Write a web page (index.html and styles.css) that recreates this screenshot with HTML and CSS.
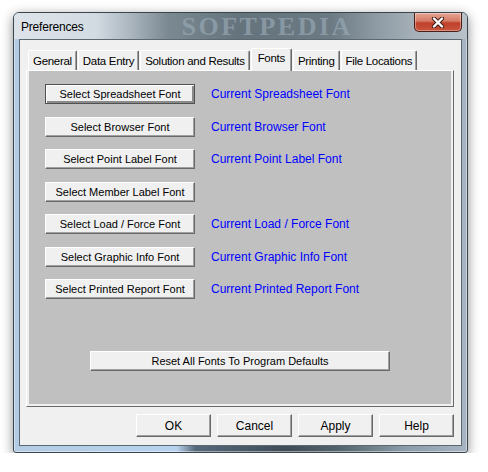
FILE: index.html
```html
<!DOCTYPE html>
<html lang="en">
<head>
    <meta charset="UTF-8">
    <meta name="viewport" content="width=device-width, initial-scale=1.0">
    <title>Preferences</title>
    <link rel="stylesheet" href="styles.css">
</head>
<body>
    <div class="window">
        <div class="titlebar">
            <span class="title">Preferences</span>
            <span class="watermark">SOFTPEDIA</span>
            <button class="close" aria-label="Close">
                <svg width="14" height="11" viewBox="0 0 14 11">
                    <path d="M3 1.5 L11 9.5 M11 1.5 L3 9.5" stroke="#3b1a14" stroke-width="4.2" stroke-linecap="round"/>
                    <path d="M3 1.5 L11 9.5 M11 1.5 L3 9.5" stroke="#fff" stroke-width="2.4" stroke-linecap="round"/>
                </svg>
            </button>
        </div>

        <div class="client">
            <div class="tabs">
                <div class="tab">General</div>
                <div class="tab">Data Entry</div>
                <div class="tab">Solution and Results</div>
                <div class="tab active">Fonts</div>
                <div class="tab">Printing</div>
                <div class="tab">File Locations</div>
            </div>

            <div class="panel">
                <div class="panel-inner">
                    <div class="font-rows">
                        <div class="font-row">
                            <button class="btn btn-default">Select Spreadsheet Font</button>
                            <span class="current">Current Spreadsheet Font</span>
                        </div>
                        <div class="font-row">
                            <button class="btn">Select Browser Font</button>
                            <span class="current">Current Browser Font</span>
                        </div>
                        <div class="font-row">
                            <button class="btn">Select Point Label Font</button>
                            <span class="current">Current Point Label Font</span>
                        </div>
                        <div class="font-row">
                            <button class="btn">Select Member Label Font</button>
                        </div>
                        <div class="font-row">
                            <button class="btn">Select Load / Force Font</button>
                            <span class="current">Current Load / Force Font</span>
                        </div>
                        <div class="font-row">
                            <button class="btn">Select Graphic Info Font</button>
                            <span class="current">Current Graphic Info Font</span>
                        </div>
                        <div class="font-row">
                            <button class="btn">Select Printed Report Font</button>
                            <span class="current">Current Printed Report Font</span>
                        </div>
                    </div>

                    <div class="reset-row">
                        <button class="btn btn-reset">Reset All Fonts To Program Defaults</button>
                    </div>
                </div>
            </div>

            <div class="actions">
                <button class="btn btn-action">OK</button>
                <button class="btn btn-action">Cancel</button>
                <button class="btn btn-action">Apply</button>
                <button class="btn btn-action">Help</button>
            </div>
        </div>
    </div>
</body>
</html>
```

FILE: styles.css
```css
body {
    margin: 0;
    background: #fff;
    font-family: 'Liberation Sans', Arial, sans-serif;
}

.window {
    width: 455px;
    height: 441px;
    margin: 12px 0 0 13px;
    box-sizing: border-box;
    border: 1px solid #3a454d;
    border-radius: 6px 6px 3px 3px;
    background: linear-gradient(90deg, #b3cce4 0%, #b7d2ee 36%, #56697a 40%, #3e4c57 60%, #55656f 72%, #8b9ba7 86%, #a6b5c1 100%);
    box-shadow: 0 3px 12px rgba(0, 0, 0, 0.45), inset 0 0 0 1px rgba(255, 255, 255, 0.45);
    padding: 0 5px 6px 5px;
    display: flex;
    flex-direction: column;
}

.titlebar {
    height: 26px;
    margin: 0 -5px;
    padding: 0 5px 0 7px;
    display: flex;
    align-items: flex-start;
    border-radius: 5px 5px 0 0;
    background: linear-gradient(90deg, #dde3e9 0%, #d3dbe2 18%, #a9b4bd 26%, #7b8993 34%, #65737d 50%, #6c7a84 70%, #8e9ba4 80%, #a4afb7 88%, #b9c2c9 100%);
}
.title {
    font-size: 12px;
    letter-spacing: -0.2px;
    color: #000;
    line-height: 28px;
}
.watermark {
    margin-left: 98px;
    font-family: 'Liberation Serif', serif;
    font-weight: bold;
    font-size: 26px;
    letter-spacing: 2.5px;
    line-height: 26px;
    margin-top: 1px;
    color: rgba(150, 168, 180, 0.7);
    flex: 1;
}
.close {
    width: 48px;
    height: 19px;
    padding: 0;
    border: 1px solid #4a1f18;
    border-top: none;
    border-radius: 0 0 5px 5px;
    background: linear-gradient(#e5a797 0%, #d67a64 45%, #c0412b 55%, #c9543c 100%);
    box-shadow: inset 0 0 0 1px rgba(255, 255, 255, 0.35);
    display: flex;
    align-items: center;
    justify-content: center;
}

.client {
    flex: 1;
    background: #f0f0f0;
    border: 1px solid #5b6771;
    padding: 8px 7px 8px 6px;
    display: flex;
    flex-direction: column;
}

.tabs {
    display: flex;
    height: 22px;
    padding-left: 2px;
}
.tab {
    height: 20px;
    margin-top: 2px;
    padding: 0 4px;
    box-sizing: border-box;
    font-size: 11.5px;
    letter-spacing: -0.3px;
    line-height: 20px;
    color: #000;
    border: 1px solid #fff;
    border-right: 1px solid #696969;
    border-bottom: none;
    box-shadow: inset -1px 0 #a0a0a0;
    border-radius: 2px 2px 0 0;
    margin-right: 1px;
}
.tab.active {
    height: 23px;
    margin-top: 0;
    padding: 0 6px;
    line-height: 18px;
    position: relative;
    z-index: 1;
    background: #f0f0f0;
}

.panel {
    height: 337px;
    box-sizing: border-box;
    border: 1px solid;
    border-color: #fff #696969 #696969 #fff;
    padding: 0 2px 2px 2px;
}
.panel-inner {
    height: 100%;
    background: #c0c0c0;
    padding: 13px 0 0 16px;
    box-sizing: border-box;
}

.font-rows {
    display: flex;
    flex-direction: column;
    gap: 12.5px;
}
.font-row {
    display: flex;
    align-items: center;
    gap: 16px;
    height: 20px;
}

.btn {
    font-family: 'Liberation Sans', Arial, sans-serif;
    font-size: 11px;
    color: #000;
    background: #f0f0f0;
    border: 1px solid;
    border-color: #fff #696969 #696969 #fff;
    box-shadow: inset -1px -1px #a0a0a0;
    padding: 0;
    margin: 0;
    height: 20px;
    width: 150px;
}
.btn-default {
    border: 1px solid #505050;
    box-shadow: inset 1px 1px #fff, inset -2px -2px #8a8a8a;
}

.current {
    font-size: 12px;
    color: #0000ff;
}

.reset-row {
    display: flex;
    justify-content: center;
    margin: 52px 0 0 -16px;
}
.btn-reset {
    width: 300px;
}

.actions {
    display: flex;
    justify-content: flex-end;
    gap: 6px;
    margin-top: 7px;
}
.btn-action {
    width: 75px;
    height: 23px;
    font-size: 12px;
}
```
